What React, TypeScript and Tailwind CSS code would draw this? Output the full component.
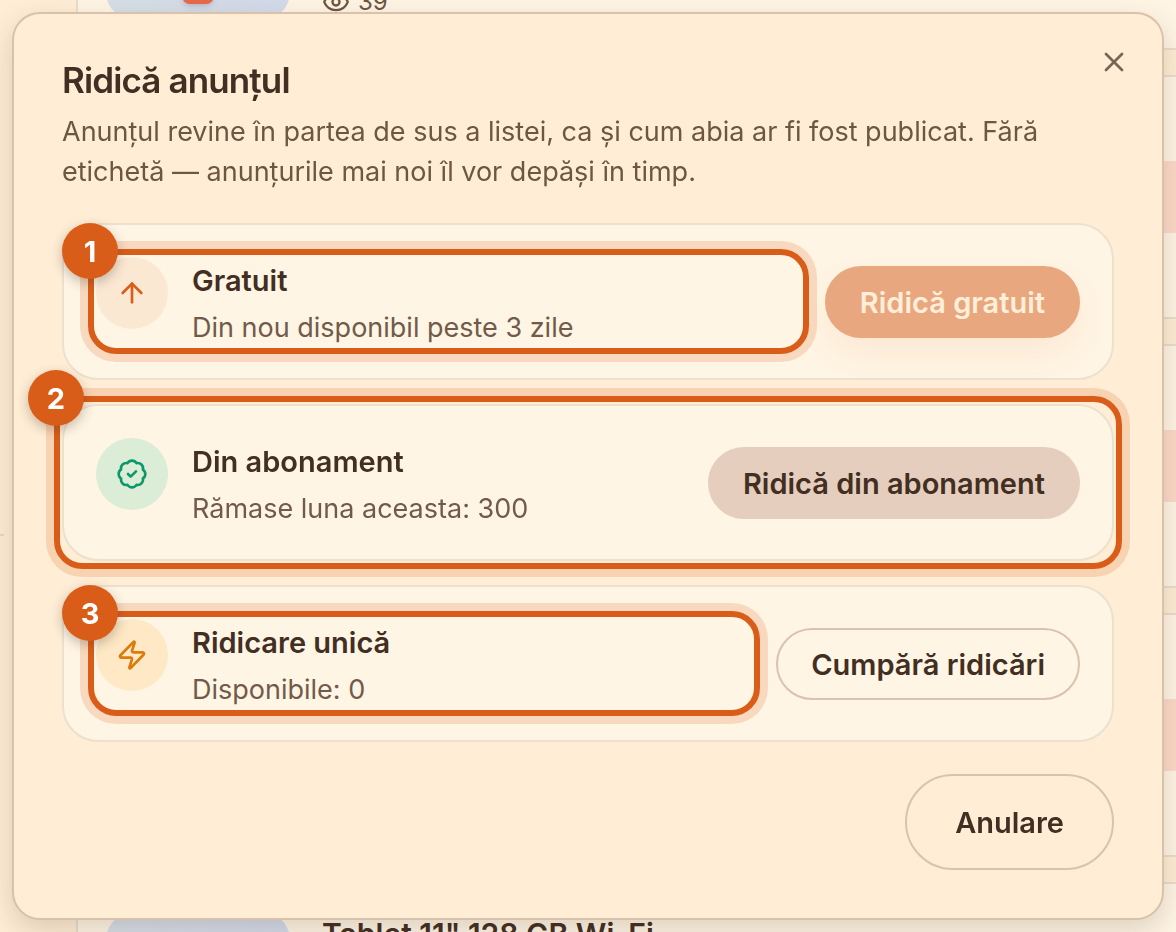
import React from 'react';
import { ArrowUp, BadgeCheck, Eye, X, Zap } from 'lucide-react';

interface BoostOption {
  id: number;
  title: string;
  note: string;
  icon: React.ReactNode;
  iconClass: string;
  action: string;
  actionClass: string;
  disabled?: boolean;
  markWholeCard?: boolean;
}

const options: BoostOption[] = [
  {
    id: 1,
    title: 'Gratuit',
    note: 'Din nou disponibil peste 3 zile',
    icon: <ArrowUp size={32} />,
    iconClass: 'bg-[#fbe8d3] text-[#d95d18]',
    action: 'Ridică gratuit',
    actionClass: 'border-[#e9a780] bg-[#e9a780] text-[#ffefd9] shadow-[0_16px_32px_rgba(217,93,24,0.08)]',
    disabled: true
  },
  {
    id: 2,
    title: 'Din abonament',
    note: 'Rămase luna aceasta: 300',
    icon: <BadgeCheck size={32} />,
    iconClass: 'bg-[#dbecd7] text-[#0c9869]',
    action: 'Ridică din abonament',
    actionClass: 'border-[#e6cebe] bg-[#e6cebe] text-[#422e22]',
    markWholeCard: true
  },
  {
    id: 3,
    title: 'Ridicare unică',
    note: 'Disponibile: 0',
    icon: <Zap size={32} />,
    iconClass: 'bg-[#fee8c5] text-[#d97c0a]',
    action: 'Cumpără ridicări',
    actionClass: 'border-[#d9c3ac] text-[#422e22]'
  }
];

const Marker: React.FC<{ number: number }> = ({ number }) => (
  <div className="pointer-events-none absolute -inset-2 z-10 rounded-[28px] border-6 border-[#d95d18] shadow-[0_0_0_8px_rgba(217,93,24,0.18)]">
    <span className="absolute -top-8 -left-8 flex size-14 items-center justify-center rounded-full bg-[#d95d18] pt-0.5 text-[29px] font-bold text-white shadow-[0_4px_12px_rgba(66,46,34,0.3)]">
      {number}
    </span>
  </div>
);

const OptionCard: React.FC<{ option: BoostOption }> = ({ option }) => (
  <li className="relative">
    <div className="flex items-center gap-6 rounded-[36px] border-2 border-[#ece1cf] bg-[#fff5e4] p-8">
      <div className="relative flex min-w-0 flex-1 items-start gap-6">
        <div className={`flex size-18 shrink-0 items-center justify-center rounded-full ${option.iconClass}`}>
          {option.icon}
        </div>
        <div className="min-w-0">
          <h3 className="text-[29px] leading-12 font-semibold text-[#422e22]">{option.title}</h3>
          <p className="mt-1 text-[27px] leading-[37px] text-[#725a4b]">{option.note}</p>
        </div>
        {!option.markWholeCard && <Marker number={option.id} />}
      </div>
      <button
        type="button"
        disabled={option.disabled}
        className={`h-18 shrink-0 rounded-full border-2 px-[33px] pt-0.5 text-[29px] font-semibold ${option.actionClass}`}
      >
        {option.action}
      </button>
    </div>
    {option.markWholeCard && <Marker number={option.id} />}
  </li>
);

const BoostDialog: React.FC = () => (
  <div
    role="dialog"
    aria-labelledby="boost-title"
    className="relative w-full rounded-[28px] border-2 border-[#d9c1aa] bg-[#ffedd5] p-12 shadow-[0_10px_28px_rgba(66,46,34,0.18)]"
  >
    <button type="button" aria-label="Închide" className="absolute top-8 right-8 text-[#7a6455]">
      <X size={32} />
    </button>
    <h2 id="boost-title" className="text-[35px] leading-9 font-semibold tracking-tight text-[#422e22]">
      Ridică anunțul
    </h2>
    <p className="mt-3.5 text-[27px] leading-10 text-[#6e5643]">
      Anunțul revine în partea de sus a listei, ca și cum abia ar fi fost publicat. Fără etichetă — anunțurile mai
      noi îl vor depăși în timp.
    </p>
    <ul className="mt-[31px] flex flex-col gap-6">
      {options.map((option) => (
        <OptionCard key={option.id} option={option} />
      ))}
    </ul>
    <div className="mt-8 flex justify-end">
      <button
        type="button"
        className="h-24 rounded-full border-2 border-[#d9c3ac] px-12 pt-0.5 text-[29px] font-semibold text-[#422e22]"
      >
        Anulare
      </button>
    </div>
  </div>
);

const Thumb: React.FC<{ children?: React.ReactNode }> = ({ children }) => (
  <div className="flex size-46 shrink-0 items-end justify-center rounded-[28px] bg-linear-to-r from-[#d6dfe6] to-[#d3daea]">
    {children}
  </div>
);

const ListingCard: React.FC<{ title?: string }> = ({ title }) => (
  <article className="flex h-61 shrink-0 gap-8 border-2 border-r-0 border-[#e9deca] bg-[#fff5e4] py-7 pl-7">
    <Thumb />
    <h3 className="flex-1 text-[30px] leading-11 font-semibold text-[#422e22]">{title}</h3>
    <div className="mt-14 h-18 w-20 bg-[#fdd9c8]" />
  </article>
);

const App: React.FC = () => {
  return (
    <main className="relative flex h-screen overflow-hidden bg-[#ffedd5] font-['Inter','Liberation_Sans',sans-serif]">
      <aside className="w-19 shrink-0 pt-[534px]">
        <hr className="w-1 border-t-2 border-[#e9d8c0]" />
      </aside>
      <div className="flex flex-1 flex-col gap-[25px]">
        {/* end of the listing scrolled past the top */}
        <article className="flex h-[50px] shrink-0 items-end gap-8 border-2 border-t-0 border-r-0 border-[#e9deca] bg-[#fff5e4] pb-7 pl-7">
          <Thumb>
            <span className="mb-4 h-8 w-8 rounded-lg bg-[#e8684a] shadow-md" />
          </Thumb>
          <p className="flex items-center gap-2 text-2xl leading-9 text-[#6e5643]">
            <Eye size={28} />
            39
          </p>
        </article>
        <ListingCard />
        <ListingCard />
        <ListingCard />
        <ListingCard title={'Tablet 11" 128 GB Wi-Fi'} />
      </div>
      <div className="fixed inset-0 flex items-start p-3">
        <BoostDialog />
      </div>
    </main>
  );
};

export default App;
